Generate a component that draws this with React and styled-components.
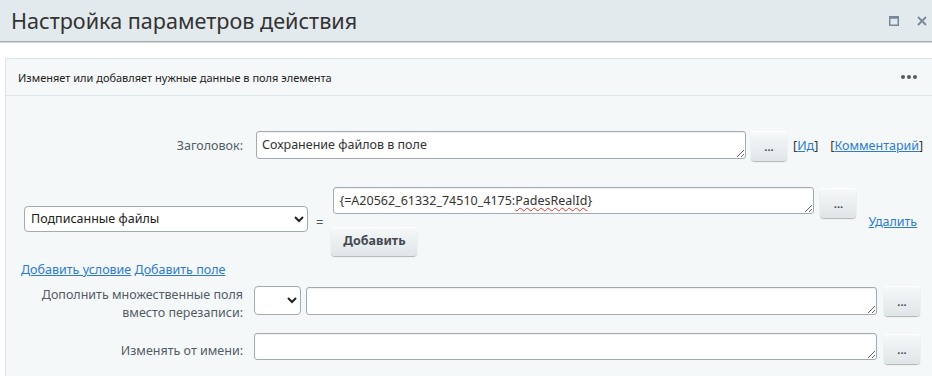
import styled, { createGlobalStyle, css } from "styled-components";

const GlobalStyle = createGlobalStyle`
  html, body {
    margin: 0;
    padding: 0;
    background: #fff;
    overflow: hidden;
  }
  body {
    font-family: "Noto Sans", "Open Sans", "Liberation Sans", sans-serif;
    color: #333;
  }
`;

const Window = styled.div`
  width: 932px;
  height: 376px;
  overflow: hidden;
`;

const TitleBar = styled.div`
  height: 41px;
  display: flex;
  align-items: center;
  padding: 0 5px 0 11px;
  background: #e3eaed;
  border-bottom: 1px solid #a9aeb2;
  box-shadow: 0 1px 0 #d4d8da;
`;

const Title = styled.h1`
  flex: 1;
  margin: 0;
  font-size: 21.6px;
  font-weight: 400;
  color: #333;
`;

const WinIcons = styled.div`
  display: flex;
  align-items: center;
  gap: 18px;
  color: #7a879b;
`;

const Content = styled.div`
  padding: 16px 0 0 5px;
`;

const Panel = styled.section`
  margin-right: -16px;
  border: 1px solid #dce5ea;
  background: #f5f8f9;
  min-height: 340px;
`;

const PanelHeader = styled.div`
  height: 36px;
  display: flex;
  align-items: center;
  padding: 0 30px 0 12px;
  border-bottom: 1px solid #dce5ea;
  font-size: 11px;
  color: #222;
`;

const HeaderText = styled.span`
  flex: 1;
`;

const Row = styled.div`
  display: flex;
  align-items: ${({ $align }) => $align || "flex-start"};
  margin-top: ${({ $top }) => $top}px;
  padding-left: ${({ $indent }) => $indent || 0}px;
`;

const Label = styled.label`
  width: 237px;
  flex-shrink: 0;
  text-align: right;
  font-size: 12.5px;
  line-height: 18px;
  color: #535c66;
  padding-top: ${({ $pt }) => $pt || 0}px;
`;

const fieldCss = css`
  box-sizing: border-box;
  flex-shrink: 0;
  border: 1px solid #a3aab1;
  border-radius: 3px;
  background: #fff;
  font-family: "Noto Sans", "Open Sans", "Liberation Sans", sans-serif;
  font-size: 12.5px;
  line-height: 17px;
  color: #333;
  padding: 4px 5px;
  resize: both;
  overflow: hidden;
  box-shadow: inset 0 1px 1px rgba(0, 0, 0, 0.06);
`;

const TextField = styled.textarea`
  ${fieldCss}
  width: ${({ $w }) => $w}px;
  height: ${({ $h }) => $h || 28}px;
  margin-left: ${({ $ml }) => $ml || 0}px;
  margin-top: ${({ $mt }) => $mt || 0}px;
`;

const TextBox = styled.div`
  ${fieldCss}
  width: ${({ $w }) => $w}px;
  height: ${({ $h }) => $h || 28}px;
  white-space: nowrap;
`;

const Misspelled = styled.span`
  text-decoration: underline wavy #e0302a;
  text-decoration-thickness: 1px;
  text-underline-offset: 2px;
`;

const Button = styled.button`
  box-sizing: border-box;
  flex-shrink: 0;
  height: ${({ $h }) => $h || 30}px;
  width: ${({ $w }) => $w || 36}px;
  margin-left: ${({ $ml }) => $ml || 0}px;
  margin-top: ${({ $mt }) => $mt || 0}px;
  padding: 0;
  border: none;
  border-radius: 4px;
  background: linear-gradient(#f7f9fa, #dfe5e8);
  box-shadow: 0 1px 1px rgba(0, 0, 0, 0.28), inset 0 1px 0 #fff;
  font-family: "Noto Sans", "Open Sans", "Liberation Sans", sans-serif;
  font-size: ${({ $bold }) => ($bold ? 12.5 : 11)}px;
  font-weight: 700;
  color: #44494f;
  line-height: 1;
`;

const Select = styled.select`
  box-sizing: border-box;
  flex-shrink: 0;
  width: ${({ $w }) => $w}px;
  height: ${({ $h }) => $h || 26}px;
  margin-left: ${({ $ml }) => $ml || 0}px;
  margin-bottom: ${({ $mb }) => $mb || 0}px;
  border: 1px solid #a3aab1;
  border-radius: 4px;
  background: #fff;
  font-family: "Noto Sans", "Open Sans", "Liberation Sans", sans-serif;
  font-size: 12.5px;
  color: #222;
  padding: 0 2px;
`;

const Link = styled.a`
  color: #2d7bd0;
  text-decoration: underline;
  cursor: pointer;
`;

const LinkGroup = styled.div`
  display: flex;
  gap: 12px;
  margin-left: 6px;
  padding-top: 7px;
  font-size: 12.5px;
  line-height: 16px;
  color: #333;
`;

const Equals = styled.span`
  margin: 0 10px 0 8px;
  font-size: 13px;
  color: #555;
`;

const ValueColumn = styled.div`
  display: flex;
  flex-direction: column;
  align-items: flex-start;
  gap: 13px;
`;

const RemoveLink = styled(Link)`
  margin-left: 12px;
  font-size: 12.5px;
`;

const AddLinks = styled.div`
  margin-top: 6px;
  padding-left: 15px;
  font-size: 12.5px;
  line-height: 16px;
`;

const Dots = () => (
  <svg width="16" height="4" viewBox="0 0 16 4">
    <circle cx="2" cy="2" r="2" fill="#555b62" />
    <circle cx="8" cy="2" r="2" fill="#555b62" />
    <circle cx="14" cy="2" r="2" fill="#555b62" />
  </svg>
);

const MaxIcon = () => (
  <svg width="10" height="10" viewBox="0 0 10 10">
    <rect x="0.75" y="0.75" width="8.5" height="8.5" fill="none" stroke="currentColor" strokeWidth="1.5" />
    <rect x="0.75" y="0.75" width="8.5" height="2" fill="currentColor" />
  </svg>
);

const CloseIcon = () => (
  <svg width="10" height="10" viewBox="0 0 10 10">
    <path d="M1 1 L9 9 M9 1 L1 9" stroke="currentColor" strokeWidth="1.8" />
  </svg>
);

export default function App() {
  return (
    <>
      <GlobalStyle />
      <Window>
        <TitleBar>
          <Title>Настройка параметров действия</Title>
          <WinIcons>
            <MaxIcon />
            <CloseIcon />
          </WinIcons>
        </TitleBar>
        <Content>
          <Panel>
            <PanelHeader>
              <HeaderText>Изменяет или добавляет нужные данные в поля элемента</HeaderText>
              <Dots />
            </PanelHeader>

            <Row $top={35}>
              <Label $pt={6}>Заголовок:</Label>
              <TextField $w={490} $ml={13} defaultValue="Сохранение файлов в поле" />
              <Button $ml={5}>...</Button>
              <LinkGroup>
                <span>[<Link>Ид</Link>]</span>
                <span>[<Link>Комментарий</Link>]</span>
              </LinkGroup>
            </Row>

            <Row $top={26} $indent={18} $align="center">
              <Select $w={284} $mb={6}>
                <option>Подписанные файлы</option>
              </Select>
              <Equals>=</Equals>
              <ValueColumn>
                <TextBox $w={481} $h={27}>
                  {"{=A20562_61332_74510_4175:"}
                  <Misspelled>PadesRealId</Misspelled>
                  {"}"}
                </TextBox>
                <Button $bold $w={86} $h={29} $ml={-2}>Добавить</Button>
              </ValueColumn>
              <Button $ml={6} style={{ alignSelf: "flex-start" }} $mt={1}>...</Button>
              <RemoveLink>Удалить</RemoveLink>
            </Row>

            <AddLinks>
              <Link>Добавить условие</Link> <Link>Добавить поле</Link>
            </AddLinks>

            <Row $top={8}>
              <Label>Дополнить множественные поля вместо перезаписи:</Label>
              <Select $w={47} $h={29} $ml={11}>
                <option></option>
              </Select>
              <TextField $w={571} $ml={5} $mt={1} />
              <Button $ml={7}>...</Button>
            </Row>

            <Row $top={11}>
              <Label $pt={9}>Изменять от имени:</Label>
              <TextField $w={623} $h={27} $ml={11} />
              <Button $ml={7} $mt={1}>...</Button>
            </Row>
          </Panel>
        </Content>
      </Window>
    </>
  );
}
